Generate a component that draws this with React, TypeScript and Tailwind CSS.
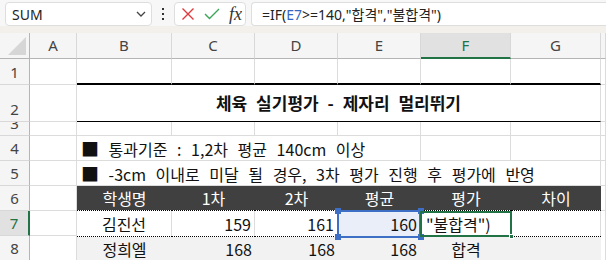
import React from "react";

const FONT = { fontFamily: "'Noto Sans CJK KR', 'Noto Sans', sans-serif" } as const;

function RowHead({ n, sel }: { n: number; sel?: boolean }) {
  return (
    <div
      className={`overflow-hidden flex items-end justify-center pb-[4px] border-b border-[#d8d8d8] ${
        sel
          ? "bg-[#e1e1e1] text-[#217346] border-r-2 border-r-[#217346]"
          : "bg-[#f5f5f5] text-[#444] border-r border-r-[#b5b5b5]"
      } text-[15px] leading-none`}
      style={{ fontFamily: "'Noto Sans', sans-serif" }}
    >
      {n}
    </div>
  );
}

const G = "border-r border-b border-[#dcdcdc]";

export default function App() {
  const colHeads = ["A", "B", "C", "D", "E", "F", "G", ""];
  return (
    <div className="w-[606px] h-[260px] overflow-hidden bg-white" style={FONT}>
      {/* Toolbar */}
      <div className="h-[26px] bg-[#f7f7f7] flex items-end pl-[5px]">
        <div className="w-[147px] h-[24px] bg-white border border-[#dedede] rounded-[4px] flex items-center justify-between pl-[6px] pr-[4px]">
          <span className="text-[14px] text-[#222]" style={{ fontFamily: "'Noto Sans', sans-serif" }}>
            SUM
          </span>
          <svg width="12" height="8" viewBox="0 0 12 8">
            <path d="M2 2 L6 6 L10 2" fill="none" stroke="#444" strokeWidth="1.3" />
          </svg>
        </div>
        <div className="w-[22px] h-[24px] flex flex-col items-center justify-center gap-[3px]">
          <div className="w-[2px] h-[2px] bg-[#333]" />
          <div className="w-[2px] h-[2px] bg-[#333]" />
          <div className="w-[2px] h-[2px] bg-[#333]" />
        </div>
        <div className="w-[72px] h-[24px] bg-white border border-[#dedede] rounded-[4px] flex items-center pl-[6px] gap-[9px]">
          <svg width="14" height="14" viewBox="0 0 14 14">
            <path d="M1.5 1.5 L12.5 12.5 M12.5 1.5 L1.5 12.5" stroke="#e0393e" strokeWidth="1.4" />
          </svg>
          <svg width="16" height="12" viewBox="0 0 16 12">
            <path d="M1 6 L5.5 10.5 L15 1" fill="none" stroke="#3ba658" strokeWidth="1.4" />
          </svg>
          <span
            className="text-[18px] italic leading-none text-[#333]"
            style={{ fontFamily: "'Liberation Serif', serif" }}
          >
            fx
          </span>
        </div>
        <div className="ml-[5px] flex-1 h-[24px] bg-white border border-[#dedede] border-r-0 rounded-l-[4px] flex items-center pl-[10px]">
          <span className="text-[14px] text-[#222]" style={{ fontFamily: "'Noto Sans', 'Noto Sans CJK KR', sans-serif" }}>
            =IF(<span className="text-[#3465c2]">E7</span>&gt;=140,"합격","불합격")
          </span>
        </div>
      </div>
      <div className="h-[7px] bg-[#f3efeb]" />

      {/* Grid */}
      <div className="grid grid-cols-[30px_47px_95px_83px_83px_83px_90px_90px_1fr] grid-rows-[26px_26px_37px_14px_25px_25px_25px_25px_25px] text-[16px] text-[#111]">
        {/* Column headers */}
        <div className="relative bg-[#f5f5f5] border-r border-b border-[#b5b5b5]">
          <svg className="absolute right-[3px] bottom-[3px]" width="18" height="18" viewBox="0 0 18 18">
            <path d="M18 0 L18 18 L0 18 Z" fill="#d6d6d6" />
          </svg>
        </div>
        {colHeads.map((c, i) => (
          <div
            key={i}
            className={`flex items-center justify-center text-[15px] border-r border-[#d8d8d8] ${
              c === "F"
                ? "bg-[#e1e1e1] text-[#217346] border-b-2 border-b-[#217346]"
                : "bg-[#f5f5f5] text-[#444] border-b border-b-[#b5b5b5]"
            }`}
            style={{ fontFamily: "'Noto Sans', sans-serif" }}
          >
            {c}
          </div>
        ))}

        {/* Row 1 */}
        <RowHead n={1} />
        <div className={G} />
        {[0, 1, 2, 3, 4, 5].map((i) => (
          <div key={i} className="border-r border-[#dcdcdc] border-b-2 border-b-black" />
        ))}
        <div className={G} />

        {/* Row 2 */}
        <RowHead n={2} />
        <div className={G} />
        <div className="col-span-6 flex items-center justify-center font-bold text-[17px] [word-spacing:5px] border-r border-r-[#dcdcdc] border-b border-b-black">
          체육 실기평가 - 제자리 멀리뛰기
        </div>
        <div className={G} />

        {/* Row 3 */}
        <RowHead n={3} />
        {[0, 1, 2, 3, 4, 5, 6, 7].map((i) => (
          <div key={i} className={G} />
        ))}

        {/* Row 4 */}
        <RowHead n={4} />
        <div className={G} />
        <div className={`col-span-4 ${G} flex items-center pl-[4px] whitespace-nowrap`}>
          <span className="[word-spacing:6px] leading-none">
            <span className="text-[18px] leading-none">■</span> 통과기준 : 1,2차 평균 140cm 이상
          </span>
        </div>
        <div className={G} />
        <div className={G} />
        <div className={G} />

        {/* Row 5 */}
        <RowHead n={5} />
        <div className={G} />
        <div className={`col-span-6 ${G} flex items-center pl-[4px] whitespace-nowrap`}>
          <span className="[word-spacing:6px] leading-none">
            <span className="text-[18px] leading-none">■</span> -3cm 이내로 미달 될 경우, 3차 평가 진행 후 평가에 반영
          </span>
        </div>
        <div className={G} />

        {/* Row 6 */}
        <RowHead n={6} />
        <div className={G} />
        {["학생명", "1차", "2차", "평균", "평가", "차이"].map((t) => (
          <div
            key={t}
            className="bg-[#404040] bg-clip-padding border-b border-dotted border-black text-white flex items-center justify-center"
          >
            {t}
          </div>
        ))}
        <div className={G} />

        {/* Row 7 */}
        <RowHead n={7} sel />
        <div className={G} />
        <div className="border-r border-[#dcdcdc] flex items-center justify-center">김진선</div>
        <div className="border-r border-[#dcdcdc] flex items-center justify-end pr-[3px]">159</div>
        <div className="border-r border-[#dcdcdc] flex items-center justify-end pr-[3px]">161</div>
        <div className="relative bg-[#e9eef8] flex items-center justify-end pr-[4px]">
          160
          <div className="absolute left-[-1px] top-[-1px] right-0 bottom-[-2px] border-2 border-[#3d6fc6]" />
          <div className="absolute left-[-3px] top-[-3px] w-[6px] h-[6px] bg-[#3d6fc6]" />
          <div className="absolute right-[-3px] top-[-3px] w-[6px] h-[6px] bg-[#3d6fc6]" />
          <div className="absolute left-[-3px] bottom-[-4px] w-[6px] h-[6px] bg-[#3d6fc6]" />
          <div className="absolute right-[-3px] bottom-[-4px] w-[6px] h-[6px] bg-[#3d6fc6]" />
        </div>
        <div className="relative flex items-center pl-[5px]">
          "불합격")
          <div className="absolute left-[-1px] top-0 right-[-1px] bottom-[-1px] border-2 border-[#217346]" />
          <div className="absolute right-[-3px] bottom-[-3px] w-[5px] h-[5px] bg-[#217346] border border-white" />
        </div>
        <div className="border-r border-[#dcdcdc]" />
        <div className="border-r border-[#dcdcdc]" />

        {/* Row 8 */}
        <RowHead n={8} />
        <div className={G} />
        <div className="bg-[#f2f2f2] bg-clip-padding border-t border-dotted border-black flex items-center justify-center">정희엘</div>
        <div className="bg-[#f2f2f2] bg-clip-padding border-t border-dotted border-black flex items-center justify-end pr-[3px]">168</div>
        <div className="bg-[#f2f2f2] bg-clip-padding border-t border-dotted border-black flex items-center justify-end pr-[3px]">168</div>
        <div className="bg-[#f2f2f2] bg-clip-padding border-t border-dotted border-black flex items-center justify-end pr-[4px]">168</div>
        <div className="bg-[#f2f2f2] bg-clip-padding border-t border-dotted border-black flex items-center justify-center">합격</div>
        <div className="bg-[#f2f2f2] bg-clip-padding border-t border-dotted border-black" />
        <div className={G} />
      </div>
    </div>
  );
}
